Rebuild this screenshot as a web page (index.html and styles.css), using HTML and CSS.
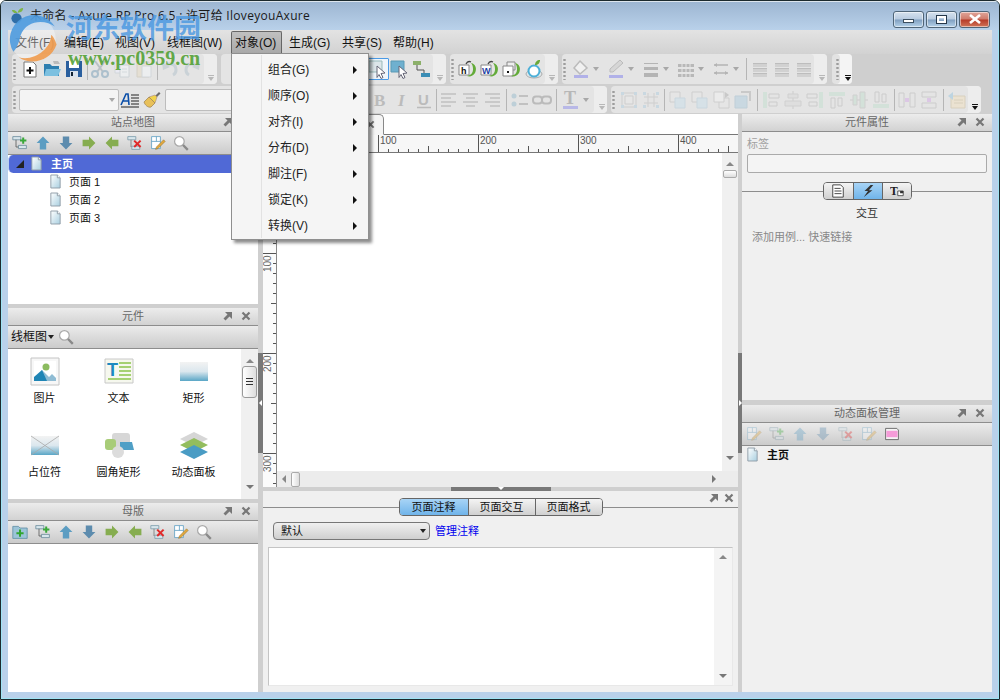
FILE: index.html
```html
<!DOCTYPE html>
<html lang="zh">
<head>
<meta charset="utf-8">
<title>未命名 - Axure RP Pro 6.5</title>
<link rel="stylesheet" href="styles.css">
</head>
<body>
<svg class="defs" width="0" height="0">
  <defs>
    <linearGradient id="gBlue" x1="0" y1="0" x2="0" y2="1"><stop offset="0" stop-color="#e8eef2"/><stop offset="1" stop-color="#6fb0cf"/></linearGradient>
    <linearGradient id="gPage" x1="0" y1="0" x2="1" y2="1"><stop offset="0" stop-color="#fff"/><stop offset="1" stop-color="#a9cfe0"/></linearGradient>
    <linearGradient id="gr" x1="0" y1="0" x2="0" y2="1"><stop offset="0" stop-color="#f3f3f3"/><stop offset=".5" stop-color="#dbe7ee"/><stop offset="1" stop-color="#5aa6c6"/></linearGradient>
    <symbol id="page" viewBox="0 0 14 16"><path d="M2 1h7l3 3v11H2z" fill="url(#gPage)" stroke="#8f9ca6"/><path d="M9 1v3h3" fill="#fff" stroke="#8f9ca6"/></symbol>
    <symbol id="new" viewBox="0 0 20 20"><path d="M4 3h9l3 3v12H4z" fill="#fff" stroke="#777"/><path d="M10 8v7M6.500 11.500h7" stroke="#111" stroke-width="2"/></symbol>
    <symbol id="open" viewBox="0 0 20 20"><path d="M2 5h6l2 2h7v10H2z" fill="#2e7fb0"/><path d="M2 17l2-7h15l-3 7z" fill="#7cc0e0"/><path d="M11 2h5l2 3h-6z" fill="#bbb"/></symbol>
    <symbol id="save" viewBox="0 0 20 20"><path d="M2 2h16v16H2z" fill="#2a5f9e"/><path d="M5 2h10v7H5z" fill="#fff"/><path d="M6 12h8v6H6z" fill="#d8e2ee"/><path d="M7 13h2v4H7z" fill="#123"/></symbol>
    <symbol id="cut" viewBox="0 0 20 20"><path d="M5 2l8 11M15 2L7 13" stroke="#99a4ad" stroke-width="2" fill="none"/><circle cx="5" cy="15" r="3" fill="none" stroke="#7fa3bb" stroke-width="2"/><circle cx="15" cy="15" r="3" fill="none" stroke="#7fa3bb" stroke-width="2"/></symbol>
    <symbol id="copy" viewBox="0 0 20 20"><path d="M3 2h8v12H3z" fill="#eef" stroke="#c4ccd2"/><path d="M8 6h9v12H8z" fill="#f4f7f9" stroke="#bcc6cc"/><path d="M10 10h5M10 13h5" stroke="#c8d2d8"/></symbol>
    <symbol id="paste" viewBox="0 0 20 20"><path d="M3 3h12v15H3z" fill="#e6dcc6" stroke="#c8c0ae"/><path d="M7 1h4v4H7z" fill="#bbb"/><path d="M8 7h9v11H8z" fill="#f4f7f9" stroke="#c4ccd2"/></symbol>
    <symbol id="undo" viewBox="0 0 20 20"><path d="M5 7c5-4 11-2 11 4 0 2-1 4-3 5" fill="none" stroke="#b5c4ce" stroke-width="3"/><path d="M2 3l1 8 7-3z" fill="#b5c4ce"/></symbol>
    <symbol id="redo" viewBox="0 0 20 20"><path d="M15 7c-5-4-11-2-11 4 0 2 1 4 3 5" fill="none" stroke="#b5c4ce" stroke-width="3"/><path d="M18 3l-1 8-7-3z" fill="#b5c4ce"/></symbol>
    <symbol id="sel1" viewBox="0 0 20 20"><path d="M1 2h13v11H1z" fill="#dce6ea" stroke="#9bb"/><path d="M9 7l8 7-4 .5 2 4-2 1-2-4-2 3z" fill="#fff" stroke="#667"/></symbol>
    <symbol id="sel2" viewBox="0 0 20 20"><path d="M1 2h13v11H1z" fill="#6fb0cf" stroke="#5a9ab5"/><path d="M9 7l8 7-4 .5 2 4-2 1-2-4-2 3z" fill="#fff" stroke="#667"/></symbol>
    <symbol id="conn" viewBox="0 0 20 20"><path d="M1 2h8v4H1z" fill="#8cb06a"/><path d="M5 6v5h7v3" fill="none" stroke="#555"/><path d="M9 14h9v4H9z" fill="#3a8db5"/></symbol>
    <symbol id="exph" viewBox="0 0 20 20"><path d="M1 6h10v10H1z" fill="#fff" stroke="#888"/><text x="3" y="14.500" font-family="Liberation Sans" font-weight="700" font-size="9" fill="#111">h</text><path d="M13 4c5 1 6 6 4 10-2 3-5 4-8 3 4-1 6-3 6-7 0-3-1-5-2-6z" fill="#64ab3a"/><path d="M8 5c1-2 3-3 5-2" fill="none" stroke="#444" stroke-width="1.300"/></symbol>
    <symbol id="expw" viewBox="0 0 20 20"><path d="M1 6h10v10H1z" fill="#fff" stroke="#888"/><text x="2" y="14.500" font-family="Liberation Sans" font-weight="700" font-size="9" fill="#1d3fa5">W</text><path d="M13 4c5 1 6 6 4 10-2 3-5 4-8 3 4-1 6-3 6-7 0-3-1-5-2-6z" fill="#64ab3a"/><path d="M8 5c1-2 3-3 5-2" fill="none" stroke="#444" stroke-width="1.300"/></symbol>
    <symbol id="expd" viewBox="0 0 20 20"><path d="M5 3h8v8H5z" fill="#eee" stroke="#888"/><path d="M1 7h10v10H1z" fill="#fff" stroke="#888"/><path d="M5 12h2v2H5z" fill="#111"/><path d="M13 4c5 1 6 6 4 10-2 3-5 4-8 3 4-1 6-3 6-7 0-3-1-5-2-6z" fill="#64ab3a"/></symbol>
    <symbol id="app" viewBox="0 0 20 20"><ellipse cx="10" cy="15" rx="8" ry="4" fill="#dfe7ea" stroke="#aaa"/><circle cx="10" cy="12" r="5.500" fill="#fff" stroke="#4db0d8" stroke-width="2"/><path d="M11 6c0-3 2-5 5-5 0 3-2 5-5 5z" fill="#6aa83a"/></symbol>
    <symbol id="fill" viewBox="0 0 20 20"><path d="M9 2l7 7-7 6-6-6z" fill="#f0f0f0" stroke="#bbb" stroke-width="1.500"/><path d="M3 16h14v3H3z" fill="#b1b1e8"/></symbol>
    <symbol id="pen" viewBox="0 0 20 20"><path d="M14 1l3 3-10 9H4v-3z" fill="#d6d6d6" stroke="#bbb"/><path d="M3 16h14v3H3z" fill="#b1b1e8"/></symbol>
    <symbol id="lines" viewBox="0 0 20 20"><path d="M3 4h14v1H3zM3 8h14v3H3zM3 14h14v4H3z" fill="#b4b4b4"/></symbol>
    <symbol id="dash" viewBox="0 0 20 20"><path d="M2 5h16v3H2zM2 10h16v3H2zM2 15h16v3H2z" fill="#b8b8b8"/><path d="M6 4v15M10 4v15M14 4v15" stroke="#e5e5e5"/></symbol>
    <symbol id="ends" viewBox="0 0 20 20"><path d="M3 6h14M3 14h14" stroke="#b4b4b4" stroke-width="1.500"/><path d="M3 6l3-2v4zM17 14l-3-2v4zM3 14l3-2v4z" fill="#b4b4b4"/></symbol>
    <symbol id="bars" viewBox="0 0 20 20"><path d="M3 4h14v1.500H3zM3 9h14v1.500H3zM3 14h14v1.500H3zM3 6.500h14v1H3zM3 11.500h14v1H3zM3 16.500h14v1H3z" fill="#bdbdbd"/></symbol>
    <symbol id="afont" viewBox="0 0 20 20"><path d="M1 15L6 4h2l1 11M3 11h6" fill="none" stroke="#0a4ea8" stroke-width="1.600"/><path d="M11 5h8M11 8h8M11 11h8M11 14h8M1 17h18" stroke="#222"/></symbol>
    <symbol id="brush" viewBox="0 0 20 20"><path d="M13 6l4-4 1.500 1.500-4 4z" fill="#6a6a6a"/><path d="M7 7l6-2 2 2-2 6z" fill="#f0d24a" stroke="#a88" stroke-width=".6"/><path d="M2 12l5-5 6 6-4 4c-3 1-6-2-7-5z" fill="#e8c05a" stroke="#9a8050" stroke-width=".7"/></symbol>
    <symbol id="bold" viewBox="0 0 20 20"><text x="4" y="16" font-family="Liberation Serif" font-weight="700" font-size="17" fill="#b5b5b5">B</text></symbol>
    <symbol id="ital" viewBox="0 0 20 20"><text x="6" y="16" font-family="Liberation Serif" font-weight="700" font-style="italic" font-size="17" fill="#b5b5b5">I</text></symbol>
    <symbol id="under" viewBox="0 0 20 20"><text x="4" y="15" font-family="Liberation Sans" font-weight="700" font-size="15" fill="#b5b5b5">U</text><path d="M3 17.500h14" stroke="#b5b5b5" stroke-width="1.500"/></symbol>
    <symbol id="al" viewBox="0 0 20 20"><path d="M2 4h15M2 8h10M2 12h15M2 16h10" stroke="#bbb" stroke-width="1.500"/></symbol>
    <symbol id="ac" viewBox="0 0 20 20"><path d="M2 4h15M5 8h9M2 12h15M5 16h9" stroke="#bbb" stroke-width="1.500"/></symbol>
    <symbol id="ar" viewBox="0 0 20 20"><path d="M2 4h15M7 8h10M2 12h15M7 16h10" stroke="#bbb" stroke-width="1.500"/></symbol>
    <symbol id="bul" viewBox="0 0 20 20"><circle cx="4" cy="6" r="2.500" fill="#b7ccd6"/><circle cx="4" cy="14" r="2.500" fill="#b7ccd6"/><path d="M9 6h9M9 14h9" stroke="#bbb" stroke-width="2"/></symbol>
    <symbol id="link" viewBox="0 0 20 20"><rect x="1" y="6.500" width="9" height="7" rx="3" fill="none" stroke="#b5b5b5" stroke-width="2"/><rect x="10" y="6.500" width="9" height="7" rx="3" fill="none" stroke="#b5b5b5" stroke-width="2"/></symbol>
    <symbol id="tcol" viewBox="0 0 20 20"><text x="3" y="14" font-family="Liberation Serif" font-weight="700" font-size="18" fill="#b0b0b0">T</text><path d="M2 16h15v3H2z" fill="#b1b1e8"/></symbol>
    <symbol id="grp" viewBox="0 0 20 20"><path d="M3 3h14v14H3z" fill="none" stroke="#c4c4c4"/><path d="M6 6h8v8H6z" fill="#e8e8e8" stroke="#c4c4c4"/><path d="M2 2h3v3H2zM15 2h3v3h-3zM2 15h3v3H2zM15 15h3v3h-3z" fill="#bcd3e0"/></symbol>
    <symbol id="ungrp" viewBox="0 0 20 20"><path d="M7 3v14M13 3v14M3 7h14M3 13h14" stroke="#c4c4c4"/><path d="M2 2h3v3H2zM15 2h3v3h-3zM2 15h3v3H2zM15 15h3v3h-3z" fill="#bcd3e0"/></symbol>
    <symbol id="ord1" viewBox="0 0 20 20"><path d="M3 2h10v10H3z" fill="#e6e6e6" stroke="#c4c4c4"/><path d="M8 8h10v10H8z" fill="#cfe0ea" stroke="#bdd0dc"/></symbol>
    <symbol id="ord2" viewBox="0 0 20 20"><path d="M8 8h10v10H8z" fill="#e6e6e6" stroke="#c4c4c4"/><path d="M3 2h10v10H3z" fill="#f0f0f0" stroke="#c4c4c4"/><path d="M14 2l4 3-4 3z" fill="#bbb"/></symbol>
    <symbol id="ord3" viewBox="0 0 20 20"><path d="M2 6h12v12H2z" fill="#bcd3e0" stroke="#adc4d2"/><path d="M8 2h9v9" fill="none" stroke="#bbb" stroke-width="2"/></symbol>
    <symbol id="ali1" viewBox="0 0 20 20"><path d="M2 2h4v16H2z" fill="#cbe0d4"/><path d="M8 4h10v4H8zM8 12h8v4H8z" fill="none" stroke="#c0c0c0"/></symbol>
    <symbol id="ali2" viewBox="0 0 20 20"><path d="M10 1v18" stroke="#c0c0c0"/><path d="M5 4h10v4H5zM2 11h16v5H2z" fill="#dcdcdc" stroke="#c6c6c6"/></symbol>
    <symbol id="ali3" viewBox="0 0 20 20"><path d="M14 2h4v16h-4z" fill="#cbe0d4"/><path d="M2 4h10v4H2zM4 12h8v4H4z" fill="none" stroke="#c0c0c0"/></symbol>
    <symbol id="ali4" viewBox="0 0 20 20"><path d="M2 2h16v4H2z" fill="#cbe0d4"/><path d="M4 8h4v10H4zM11 8h4v8h-4z" fill="none" stroke="#c0c0c0"/></symbol>
    <symbol id="ali5" viewBox="0 0 20 20"><path d="M1 10h18" stroke="#c0c0c0"/><path d="M4 5h4v10H4zM11 2h5v16h-5z" fill="#cbe0d4" stroke="#c6c6c6"/></symbol>
    <symbol id="ali6" viewBox="0 0 20 20"><path d="M2 14h16v4H2z" fill="#cbe0d4"/><path d="M4 2h4v10H4zM11 4h4v8h-4z" fill="none" stroke="#c0c0c0"/></symbol>
    <symbol id="dis1" viewBox="0 0 20 20"><path d="M2 3h5v14H2zM13 3h5v14h-5z" fill="none" stroke="#c0c0c0"/><path d="M8 8h4v4H8z" fill="#d9b8e6"/></symbol>
    <symbol id="dis2" viewBox="0 0 20 20"><path d="M3 2h14v5H3zM3 13h14v5H3z" fill="none" stroke="#c0c0c0"/><path d="M8 8h4v4H8z" fill="#d9b8e6"/></symbol>
    <symbol id="impt" viewBox="0 0 20 20"><path d="M4 6h14v12H4z" fill="#efe2c8" stroke="#d2c6aa"/><path d="M1 6l5-4v8z" fill="#a9cde0"/><path d="M7 10h9M7 13h9" stroke="#d2c6aa"/></symbol>
    <symbol id="addc" viewBox="0 0 20 20"><path d="M1 2h10v4H1zM8 13h10v4H8z" fill="#d8e6ec" stroke="#6a8a9a"/><path d="M5 6v9h3" fill="none" stroke="#555"/><path d="M14 3v8M10 7h8" stroke="#3aa83a" stroke-width="2.500"/></symbol>
    <symbol id="up" viewBox="0 0 20 20"><path d="M10 2l8 8h-4v8H6v-8H2z" fill="#5c9dc2"/></symbol>
    <symbol id="down" viewBox="0 0 20 20"><path d="M10 18l8-8h-4V2H6v8H2z" fill="#5d8cae"/></symbol>
    <symbol id="right" viewBox="0 0 20 20"><path d="M18 10l-8 8v-4H2V6h8V2z" fill="#86ad50"/></symbol>
    <symbol id="left" viewBox="0 0 20 20"><path d="M2 10l8 8v-4h8V6h-8V2z" fill="#86ad50"/></symbol>
    <symbol id="del" viewBox="0 0 20 20"><path d="M1 2h10v4H1zM6 14h10v4H6z" fill="#d8e6ec" stroke="#7a9aaa"/><path d="M5 6v9" stroke="#777"/><path d="M9 7l8 8M17 7l-8 8" stroke="#e02a2a" stroke-width="2.500"/></symbol>
    <symbol id="edit" viewBox="0 0 20 20"><path d="M2 2h11v15H2zM2 8h11M8 2v6" fill="#fff" stroke="#5c9dc2"/><path d="M17 6l2 2-9 9-3 1 1-3z" fill="#e2a93e" stroke="#8a6a2a" stroke-width=".6"/></symbol>
    <symbol id="find" viewBox="0 0 20 20"><circle cx="8" cy="8" r="6" fill="#fff" stroke="#a8a8a8" stroke-width="1.500"/><path d="M12.500 12.500l6 6" stroke="#8a8a8a" stroke-width="3"/></symbol>
    <symbol id="addm" viewBox="0 0 20 20"><path d="M1 3h7l2 2h9v13H1z" fill="#9cc4d8" stroke="#5f8ea5"/><path d="M10 7v9M5.500 11.500h9" stroke="#31a531" stroke-width="2.500"/></symbol>
    <symbol id="dpanel" viewBox="0 0 20 20"><path d="M2 3h14l2 2v12H2z" fill="#f4f4f4" stroke="#555"/><path d="M3 6h14v8H3z" fill="#f59bd8"/></symbol>
    <symbol id="pin" viewBox="0 0 10 10"><path d="M2 1h7v7L6.500 5.500 2.500 9.500 .5 7.500 4.500 3.500z" fill="#777"/></symbol>
    <symbol id="x" viewBox="0 0 10 10"><path d="M1.500 1.500l7 7M8.500 1.500l-7 7" stroke="#777" stroke-width="2.200"/></symbol>
    <symbol id="note" viewBox="0 0 16 16"><path d="M2 1h9l3 3v11H2z" fill="#fff" stroke="#333"/><path d="M4 5h7M4 8h8M4 11h8" stroke="#333"/></symbol>
    <symbol id="bolt" viewBox="0 0 16 16"><path d="M11 1L4 8h4l-5 7 10-8H9l5-6z" fill="#333"/></symbol>
    <symbol id="tstyle" viewBox="0 0 18 16"><text x="0" y="13" font-family="Liberation Serif" font-weight="700" font-size="15" fill="#222">T</text><path d="M10 8h7v6h-7z" fill="#fff" stroke="#333"/><path d="M13 8h4v3h-4z" fill="#333"/></symbol>
    <symbol id="wimg" viewBox="0 0 30 30"><path d="M1 1h28v27H1z" fill="#f7f7f7" stroke="#c4c4c4"/><path d="M4 4h22v20H4z" fill="#fff"/><circle cx="16" cy="10" r="3.500" fill="#8cbc60"/><path d="M4 24l8-11 7 7 3-3 4 4v3z" fill="#8fbcd4"/><path d="M4 24v-4l8-7 5 11z" fill="#1f85b5"/></symbol>
    <symbol id="wtxt" viewBox="0 0 30 30"><path d="M1 2h28v24H1z" fill="#f6f8ee" stroke="#c8c8c8"/><text x="3" y="19" font-family="Liberation Sans" font-weight="700" font-size="18" fill="#1c8ac0">T</text><path d="M15 6h12M15 10h12M15 14h12M15 18h12M4 22h23" stroke="#8cc44a" stroke-width="1.500"/></symbol>
    <symbol id="wrect" viewBox="0 0 30 30"><path d="M1 5h28v19H1z" fill="url(#gr)"/></symbol>
    <symbol id="wph" viewBox="0 0 30 30"><path d="M1 5h28v19H1z" fill="url(#gr)"/><path d="M1 5l28 19M29 5L1 24" stroke="#aaa" stroke-width=".8"/></symbol>
    <symbol id="wround" viewBox="0 0 30 30"><rect x="8" y="2" width="18" height="14" rx="3" fill="#d7d7d7"/><path d="M16 11h12l2 8H16z" fill="#4f9fc6"/><rect x="1" y="8" width="11" height="11" rx="3" fill="#a8cc78"/><circle cx="14" cy="21" r="6" fill="#dcdcdc"/></symbol>
    <symbol id="wdyn" viewBox="0 0 30 30"><path d="M15 1l14 7-14 7L1 8z" fill="#d6d6d6"/><path d="M15 7l14 7-14 7L1 14z" fill="#93bd5e"/><path d="M15 14l14 7-14 7L1 21z" fill="#4a9cc4"/></symbol>
  </defs>
</svg>

<div class="window">
  <header class="titlebar">
    <svg class="appicon" viewBox="0 0 16 18"><circle cx="7" cy="12" r="5.500" fill="#2f6ea8"/><path d="M8 6C6 3 4 3 2 3c1 3 3 4 6 3zM8 6c1-3 3-5 6-5 0 3-2 5-6 5z" fill="#7db548"/></svg>
    <span class="title-text">未命名 - Axure RP Pro 6.5 : 许可给 IloveyouAxure</span>
    <div class="winbtns">
      <div class="wbtn"><span class="min-mark"></span></div>
      <div class="wbtn"><span class="max-mark"></span></div>
      <div class="wbtn wclose"><svg class="close-mark" viewBox="0 0 14 10"><path d="M2 1l10 8M12 1L2 9" stroke="#fff" stroke-width="2.600"/></svg></div>
    </div>
  </header>

  <div class="chrome">
    <nav class="menubar">
      <span class="mitem w49">文件(F)</span>
      <span class="mitem w51">编辑(E)</span>
      <span class="mitem w52">视图(V)</span>
      <span class="mitem w68">线框图(W)</span>
      <span class="mitem w51 mopen">对象(O)</span>
      <span class="mitem w53">生成(G)</span>
      <span class="mitem w51">共享(S)</span>
      <span class="mitem w51">帮助(H)</span>
    </nav>

    <div class="toolrow row1">
      <div class="tgroup g1">
        <span class="handle"></span>
        <span class="ti"><svg><use href="#new"/></svg></span>
        <span class="ti"><svg><use href="#open"/></svg></span>
        <span class="ti"><svg><use href="#save"/></svg></span>
        <span class="sep"></span>
        <span class="ti off"><svg><use href="#cut"/></svg></span>
        <span class="ti off"><svg><use href="#copy"/></svg></span>
        <span class="ti off"><svg><use href="#paste"/></svg></span>
        <span class="sep"></span>
        <span class="ti off"><svg><use href="#undo"/></svg></span>
        <span class="ti off"><svg><use href="#redo"/></svg></span>
        <span class="over"></span>
      </div>
      <div class="tgroup g2">
        <span class="ti selected"><svg><use href="#sel1"/></svg></span>
        <span class="ti"><svg><use href="#sel2"/></svg></span>
        <span class="ti"><svg><use href="#conn"/></svg></span>
        <span class="over"></span>
      </div>
      <div class="tgroup g3">
        <span class="handle"></span>
        <span class="ti"><svg><use href="#exph"/></svg></span>
        <span class="ti"><svg><use href="#expw"/></svg></span>
        <span class="ti"><svg><use href="#expd"/></svg></span>
        <span class="ti"><svg><use href="#app"/></svg></span>
        <span class="over"></span>
      </div>
      <div class="tgroup g4">
        <span class="handle"></span>
        <span class="ti split"><svg><use href="#fill"/></svg><i class="caret"></i></span>
        <span class="ti split"><svg><use href="#pen"/></svg><i class="caret"></i></span>
        <span class="ti split"><svg><use href="#lines"/></svg><i class="caret"></i></span>
        <span class="ti split"><svg><use href="#dash"/></svg><i class="caret"></i></span>
        <span class="ti split"><svg><use href="#ends"/></svg><i class="caret"></i></span>
        <span class="sep s5"></span>
        <span class="ti"><svg><use href="#bars"/></svg></span>
        <span class="ti"><svg><use href="#bars"/></svg></span>
        <span class="ti"><svg><use href="#bars"/></svg></span>
        <span class="over"></span>
      </div>
      <div class="tgroup g5">
        <span class="handle"></span>
        <span class="over dark"></span>
      </div>
    </div>

    <div class="toolrow row2">
      <div class="tgroup ga">
        <span class="handle short"></span>
        <span class="combo c1"><i class="caret"></i></span>
        <span class="ti"><svg><use href="#afont"/></svg></span>
        <span class="ti"><svg><use href="#brush"/></svg></span>
        <span class="combo c2"></span>
        <span class="ti"><svg><use href="#bold"/></svg></span>
        <span class="ti"><svg><use href="#ital"/></svg></span>
        <span class="ti"><svg><use href="#under"/></svg></span>
        <span class="sep s3"></span>
        <span class="ti"><svg><use href="#al"/></svg></span>
        <span class="ti"><svg><use href="#ac"/></svg></span>
        <span class="ti"><svg><use href="#ar"/></svg></span>
        <span class="sep s5"></span>
        <span class="ti"><svg><use href="#bul"/></svg></span>
        <span class="ti"><svg><use href="#link"/></svg></span>
        <span class="sep s6"></span>
        <span class="ti split t2"><svg><use href="#tcol"/></svg><i class="caret"></i></span>
        <span class="over"></span>
      </div>
      <div class="tgroup gb">
        <span class="handle short"></span>
        <span class="ti"><svg><use href="#grp"/></svg></span>
        <span class="ti"><svg><use href="#ungrp"/></svg></span>
        <span class="sep"></span>
        <span class="ti"><svg><use href="#ord1"/></svg></span>
        <span class="ti"><svg><use href="#ord1"/></svg></span>
        <span class="ti"><svg><use href="#ord2"/></svg></span>
        <span class="ti"><svg><use href="#ord3"/></svg></span>
        <span class="sep s6"></span>
        <span class="ti"><svg><use href="#ali1"/></svg></span>
        <span class="ti"><svg><use href="#ali2"/></svg></span>
        <span class="ti"><svg><use href="#ali3"/></svg></span>
        <span class="ti"><svg><use href="#ali4"/></svg></span>
        <span class="ti"><svg><use href="#ali5"/></svg></span>
        <span class="ti"><svg><use href="#ali6"/></svg></span>
        <span class="sep"></span>
        <span class="ti"><svg><use href="#dis1"/></svg></span>
        <span class="ti"><svg><use href="#dis2"/></svg></span>
        <span class="sep s6"></span>
        <span class="ti"><svg><use href="#impt"/></svg></span>
        <span class="over dark"></span>
      </div>
    </div>

    <main class="workspace">
      <aside class="col-left">
        <section class="panel p-sitemap">
          <div class="phead">站点地图<span class="pbtns"><svg><use href="#pin"/></svg><svg><use href="#x"/></svg></span></div>
          <div class="ptools">
            <svg><use href="#addc"/></svg><svg><use href="#up"/></svg><svg><use href="#down"/></svg><svg><use href="#right"/></svg><svg><use href="#left"/></svg><svg><use href="#del"/></svg><svg><use href="#edit"/></svg><svg><use href="#find"/></svg>
          </div>
          <div class="tree">
            <div class="tnode root"><i class="expander"></i><svg class="pg"><use href="#page"/></svg><b>主页</b></div>
            <div class="tnode child"><svg class="pg"><use href="#page"/></svg>页面 1</div>
            <div class="tnode child"><svg class="pg"><use href="#page"/></svg>页面 2</div>
            <div class="tnode child"><svg class="pg"><use href="#page"/></svg>页面 3</div>
          </div>
        </section>
        <section class="panel p-widgets">
          <div class="phead">元件<span class="pbtns"><svg><use href="#pin"/></svg><svg><use href="#x"/></svg></span></div>
          <div class="ptools wtools"><span class="wlib">线框图</span><i class="caret black"></i><svg><use href="#find"/></svg></div>
          <div class="wbody">
            <div class="wgrid">
              <div class="widget"><svg><use href="#wimg"/></svg><span>图片</span></div>
              <div class="widget"><svg><use href="#wtxt"/></svg><span>文本</span></div>
              <div class="widget"><svg><use href="#wrect"/></svg><span>矩形</span></div>
              <div class="widget"><svg><use href="#wph"/></svg><span>占位符</span></div>
              <div class="widget"><svg><use href="#wround"/></svg><span>圆角矩形</span></div>
              <div class="widget"><svg><use href="#wdyn"/></svg><span>动态面板</span></div>
            </div>
            <div class="vbar wbar"><i class="ar-up"></i><span class="wthumb"></span><i class="ar-dn"></i></div>
          </div>
        </section>
        <section class="panel p-masters">
          <div class="phead">母版<span class="pbtns"><svg><use href="#pin"/></svg><svg><use href="#x"/></svg></span></div>
          <div class="ptools">
            <svg><use href="#addm"/></svg><svg><use href="#addc"/></svg><svg><use href="#up"/></svg><svg><use href="#down"/></svg><svg><use href="#right"/></svg><svg><use href="#left"/></svg><svg><use href="#del"/></svg><svg><use href="#edit"/></svg><svg><use href="#find"/></svg>
          </div>
          <div class="blank"></div>
        </section>
      </aside>

      <div class="vsplit"><span class="grip"><i class="nub-l"></i></span></div>

      <div class="col-center">
        <div class="tabbar"><span class="ptab"><svg><use href="#x"/></svg></span></div>
        <div class="hruler">
          <span class="rcell"></span>
          <span class="rcell">100</span><span class="rcell">200</span><span class="rcell">300</span><span class="rcell">400</span>
        </div>
        <div class="canvas-area">
          <div class="vruler">
            <span class="vcell"></span>
            <span class="vcell"><span class="vlab">100</span></span><span class="vcell"><span class="vlab">200</span></span><span class="vcell"><span class="vlab">300</span></span>
          </div>
          <div class="canvas-col">
            <div class="canvas-row">
              <div class="canvas"></div>
              <div class="vbar cbar"><i class="ar-up"></i><span class="cthumb"></span><i class="ar-dn"></i></div>
            </div>
            <div class="hbar"><i class="ar-lf"></i><span class="hthumb"></span><i class="ar-rt"></i></div>
          </div>
        </div>
        <div class="hsplit"><span class="hgrip"><i class="nub-d"></i></span></div>
        <section class="notes">
          <span class="pbtns"><svg><use href="#pin"/></svg><svg><use href="#x"/></svg></span>
          <div class="seg-wrap">
            <div class="seg">
              <span class="seg-b on">页面注释</span><span class="seg-b">页面交互</span><span class="seg-b">页面格式</span>
            </div>
          </div>
          <div class="note-ctl">
            <div class="dropdown"><span>默认</span><i class="caret black"></i></div>
            <a class="manage">管理注释</a>
          </div>
          <div class="note-area">
            <div class="vbar nbar"><i class="ar-up"></i><i class="ar-dn"></i></div>
          </div>
        </section>
      </div>

      <div class="vsplit vs2"><span class="grip"><i class="nub-r"></i></span></div>

      <aside class="col-right">
        <section class="panel p-props">
          <div class="phead">元件属性<span class="pbtns"><svg><use href="#pin"/></svg><svg><use href="#x"/></svg></span></div>
          <div class="lbl">标签</div>
          <div class="txtbox"></div>
          <div class="seg-wrap s2">
            <div class="seg seg-ic">
              <span class="seg-b"><svg><use href="#note"/></svg></span><span class="seg-b on"><svg><use href="#bolt"/></svg></span><span class="seg-b"><svg><use href="#tstyle"/></svg></span>
            </div>
          </div>
          <div class="inter">交互</div>
          <div class="quick">添加用例... 快速链接</div>
        </section>
        <section class="panel p-dyn">
          <div class="phead">动态面板管理<span class="pbtns"><svg><use href="#pin"/></svg><svg><use href="#x"/></svg></span></div>
          <div class="ptools dtools">
            <svg class="off"><use href="#edit"/></svg><svg class="off"><use href="#addc"/></svg><svg class="off"><use href="#up"/></svg><svg class="off"><use href="#down"/></svg><svg class="off"><use href="#del"/></svg><svg class="off"><use href="#edit"/></svg><svg><use href="#dpanel"/></svg>
          </div>
          <div class="dnode"><svg class="pg"><use href="#page"/></svg><b>主页</b></div>
        </section>
      </aside>
    </main>
  </div>

  <ul class="dropmenu">
    <li>组合(G)</li>
    <li>顺序(O)</li>
    <li>对齐(I)</li>
    <li>分布(D)</li>
    <li>脚注(F)</li>
    <li>锁定(K)</li>
    <li>转换(V)</li>
  </ul>

  <div class="watermark">
    <svg class="wm-logo" viewBox="0 0 60 60">
      <circle cx="28" cy="28" r="25" fill="#fff" fill-opacity=".35"/>
      <path d="M6 42A26 26 0 0 1 52 14C42 6 20 6 14 24c-2 7-3 13-8 18z" fill="#4d9ade" fill-opacity=".9"/>
      <path d="M12 48c14 10 36 4 42-14-2-6-4-9-6-11 0 16-20 30-36 25z" fill="#ee9a4d" fill-opacity=".9"/>
    </svg>
    <span class="wm-cn">河东软件园</span>
    <span class="wm-url">www.pc0359.cn</span>
  </div>
</div>
</body>
</html>
```
FILE: styles.css
```css
* { box-sizing: border-box; }
html, body { margin: 0; padding: 0; }
body {
  width: 1000px; height: 700px; overflow: hidden;
  font: 11px/16px "Liberation Sans", "Noto Sans CJK SC", sans-serif;
  color: #111;
}
.defs { position: absolute; }
svg { display: block; }
i { display: block; font-style: normal; }

.window {
  position: relative;
  width: 1000px; height: 700px;
  display: flex; flex-direction: column;
  background: #b9d1ea;
  border: 1px solid #1c2a2e;
  border-radius: 6px 6px 0 0;
  box-shadow: inset 0 0 0 1px #9fe4f4;
  overflow: hidden;
}

.titlebar {
  height: 29px; flex: none;
  display: flex; align-items: center;
  padding: 0 9px 0 9px;
  background: linear-gradient(#9cb5d1, #b9d1ea);
  box-shadow: inset 0 1px 0 #dde6ee;
}
.appicon { width: 15px; height: 17px; margin-right: 5px; }
.title-text { font-family: "Open Sans", "Noto Sans CJK SC", sans-serif; font-size: 12px; letter-spacing: .3px; color: #1a1a1a; flex: 1; }
.winbtns { display: flex; gap: 2px; margin-top: 7px; }
.wbtn {
  width: 31px; height: 17px;
  border: 1px solid #4f6578; border-radius: 3px;
  display: flex; align-items: center; justify-content: center;
  background: linear-gradient(#d6e2ee 0, #b8cbe0 48%, #7f9fc0 52%, #b5d2ea 100%);
  box-shadow: inset 0 0 0 1px rgba(255,255,255,.5);
}
.wclose { background: linear-gradient(#e0a69a 0, #cf7a6a 48%, #b63a28 52%, #d07458 100%); }
.min-mark { width: 11px; height: 4px; background: #fff; border: 1px solid #3c4f60; margin-top: 4px; }
.max-mark { width: 11px; height: 9px; background: transparent; border: 1px solid #26384a; box-shadow: inset 0 0 0 2px #fff; }
.close-mark { width: 14px; height: 10px; }

.chrome {
  flex: 1; min-height: 0;
  margin: 0 7px 7px 7px;
  display: flex; flex-direction: column;
  background: #cfcfcf;
}

.menubar {
  height: 24px; flex: none;
  display: flex; align-items: center;
  padding: 0 0 0 3px;
  background: linear-gradient(#e3e3e3, #d2d2d2);
}
.mitem { font-size: 12px; padding: 0 0 0 3px; height: 23px; line-height: 22px; white-space: nowrap; border: 1px solid transparent; flex: none; }
.w49 { width: 49px; } .w51 { width: 51px; } .w52 { width: 52px; } .w53 { width: 53px; } .w68 { width: 68px; }
.mopen {
  border: 1px solid #666; border-bottom: none; border-radius: 2px 2px 0 0;
  background: linear-gradient(#c0c0c0, #a8a8a8);
  margin-right: 3px;
}

.toolrow { display: flex; flex: none; padding-left: 4px; gap: 4px; }
.row1 { height: 30px; }
.row2 { height: 27px; margin-top: 2px; }
.tgroup {
  display: flex; align-items: center;
  background: #e4e4e4;
  border-radius: 4px;
  box-shadow: inset -13px 0 0 #ededed;
}
.row1 .tgroup { height: 30px; }
.g1 { width: 205px; }
.g2 { width: 225px; padding-left: 146px; }
.g3 { width: 108px; }
.g4 { width: 265px; }
.g5 { width: 20px; margin-left: 1px; box-shadow: inset -12px 0 0 #f4f4f4; background: #e2e2e2; }
.ga { width: 595px; height: 27px; }
.gb { width: 370px; height: 27px; }
.handle {
  width: 7px; height: 22px; flex: none;
  background: radial-gradient(circle at 2.5px 2px, #9d9d9d 1px, transparent 1.4px) 0 0 / 7px 4px repeat-y;
}
.handle.short { height: 20px; }
.ti {
  width: 22px; height: 22px; flex: none;
  display: flex; align-items: center; justify-content: center;
  position: relative;
}
.ti svg { width: 20px; height: 20px; }
.ti.off svg { opacity: .55; }
.ptools svg.off { opacity: .35; }
.gb .ti svg { opacity: .65; }
.c2 ~ .ti svg { opacity: .85; }
.ti.selected { border: 1px solid #4a9ae6; background: #eef5fb; border-radius: 1px; }
.ti.split { width: 35px; justify-content: flex-start; padding-left: 2px; gap: 2px; }
.ti.split.t2 { width: 36px; }
.caret { width: 0; height: 0; flex: none; border: 3.5px solid transparent; border-top: 4px solid #a8a8a8; border-bottom: 0; }
.caret.black { border-top-color: #222; }
.sep { width: 4px; height: 22px; flex: none; background: linear-gradient(#b5b5b5, #b5b5b5) center / 1px 100% no-repeat; }
.sep.s3 { width: 3px; }
.sep.s5 { width: 5px; }
.sep.s6 { width: 6px; }
.over {
  margin-left: auto; width: 13px; height: 100%; flex: none;
  display: flex; flex-direction: column; align-items: center; justify-content: flex-end;
  padding-bottom: 3px; gap: 1px;
}
.over::before { content: ""; width: 6px; height: 1px; background: #b8b8b8; }
.over::after { content: ""; width: 0; height: 0; border: 3px solid transparent; border-top: 4px solid #b8b8b8; border-bottom: 0; }
.over.dark::before { background: #111; }
.over.dark::after { border-top-color: #111; }
.g5 .handle { width: 8px; margin-left: 3px; }
.g5 .over { width: 9px; }
.combo {
  height: 22px; flex: none; background: #f4f4f4; border: 1px solid #bdbdbd; border-radius: 2px;
  display: flex; align-items: center; justify-content: flex-end; padding-right: 3px;
}
.c1 { width: 100px; }
.c2 { width: 202px; margin: 0 2px; }

.workspace {
  flex: 1; min-height: 0;
  display: grid; grid-template-columns: 250px 5px 475px 4px 250px;
  padding-top: 1px;
}
.col-left, .col-right, .col-center { display: flex; flex-direction: column; min-height: 0; }
.panel { background: #f0f0f0; display: flex; flex-direction: column; min-height: 0; position: relative; }
.p-sitemap { height: 190px; }
.p-widgets { height: 191px; margin-top: 4px; }
.p-masters { flex: 1; margin-top: 4px; }
.phead {
  height: 18px; flex: none; position: relative;
  text-align: center; color: #666; line-height: 17px;
  background: linear-gradient(#ececec, #d2d2d2);
  border-bottom: 1px solid #8d8d8d;
}
.pbtns { position: absolute; right: 7px; top: 3px; display: flex; gap: 8px; }
.pbtns svg { width: 10px; height: 10px; }
.ptools {
  height: 23px; flex: none;
  display: flex; align-items: center; gap: 7px; padding-left: 4px;
  background: linear-gradient(#ebebeb, #cbcbcb);
  border-bottom: 1px solid #8d8d8d;
}
.ptools svg { width: 16px; height: 16px; flex: none; }
.tree { flex: 1; background: #fff; }
.tnode { height: 18px; display: flex; align-items: center; white-space: nowrap; padding-bottom: 1px; }
.pg { width: 13px; height: 15px; flex: none; }
.root { background: #5069d6; color: #fff; padding-left: 7px; border-left: 1px solid #b9cdf0; border-radius: 5px 0 0 5px; }
.root b { margin-left: 8px; font-weight: 700; }
.root .pg { margin-left: 6px; }
.expander { width: 0; height: 0; border-left: 8px solid transparent; border-bottom: 8px solid #222; }
.child { padding-left: 41px; gap: 7px; }

.wtools { gap: 0; padding-left: 3px; }
.wlib { color: #111; font-size: 12px; }
.wtools .caret { margin: 0 4px 0 1px; }
.wbody { flex: 1; display: flex; background: #fff; min-height: 0; }
.wgrid { flex: 1; display: grid; grid-template-columns: 73px 75px 75px; grid-auto-rows: 74px; padding-top: 8px; }
.widget { display: flex; flex-direction: column; align-items: center; gap: 3px; }
.widget svg { width: 30px; height: 30px; }
.vbar { background: #f0f0f0; display: flex; flex-direction: column; align-items: center; }
.wbar { width: 17px; padding: 5px 0; justify-content: space-between; position: relative; }
.wthumb {
  position: absolute; top: 17px; left: 1px; width: 15px; height: 32px;
  border: 1px solid #9a9a9a; border-radius: 3px;
  background:
    repeating-linear-gradient(#333 0 1px, transparent 1px 3px) center / 7px 9px no-repeat,
    linear-gradient(90deg, #fff, #ddd);
}
.ar-up, .ar-dn, .ar-lf, .ar-rt { width: 0; height: 0; flex: none; border: 4px solid transparent; }
.ar-up { border-top: 0; border-bottom: 4px solid #888; margin-top: 5px; }
.ar-dn { border-bottom: 0; border-top: 4px solid #777; margin-bottom: 5px; }
.ar-lf { border-left: 0; border-right: 4px solid #888; }
.ar-rt { border-right: 0; border-left: 4px solid #777; }
.blank { flex: 1; background: #fff; }

.vsplit { background: #cfcfcf; display: flex; align-items: flex-start; }
.grip {
  margin-top: 239px; width: 100%; height: 100px; background: #787878;
  display: flex; align-items: center; justify-content: center;
}
.nub-l { border: 3px solid transparent; border-right: 3px solid #fff; border-left: 0; width: 0; height: 0; }
.nub-r { border: 3px solid transparent; border-left: 3px solid #fff; border-right: 0; width: 0; height: 0; }

.tabbar { height: 21px; flex: none; background: #fff; border-bottom: 1px solid #777; display: flex; padding-left: 86px; }
.ptab {
  width: 35px; height: 21px; background: #f4f4f4;
  border: 1px solid #888; border-bottom: 1px solid #f4f4f4; border-radius: 0 5px 0 0;
  display: flex; align-items: center; justify-content: flex-end; padding-right: 8px;
}
.ptab svg { width: 9px; height: 9px; }
.hruler {
  height: 18px; flex: none; display: flex; padding-left: 15px;
  background: #f7f7f7; border-bottom: 1px solid #777; overflow: hidden;
  color: #555; font-size: 10px; line-height: 12px;
}
.rcell {
  width: 100px; flex: none; padding-left: 2px;
  background:
    linear-gradient(#555, #555) 0 0 / 1px 100% no-repeat,
    linear-gradient(#555, #555) 50px 11px / 1px 6px no-repeat,
    repeating-linear-gradient(90deg, #555 0 1px, transparent 1px 10px) 0 14px / 100% 3px no-repeat;
}
.canvas-area { display: flex; height: 334px; flex: none; }
.vruler {
  width: 14px; flex: none; background: #fbfbfb; overflow: hidden;
  color: #666; font-size: 10px; line-height: 10px;
  border-right: 1px solid #888;
}
.vcell {
  display: block; height: 100px; width: 13px; padding-top: 1px;
  background:
    linear-gradient(#555, #555) 0 0 / 100% 1px no-repeat,
    linear-gradient(#555, #555) 8px 50px / 5px 1px no-repeat,
    repeating-linear-gradient(#555 0 1px, transparent 1px 10px) 10px 0 / 3px 100% no-repeat;
}
.vlab { display: block; width: 10px; height: 18px; writing-mode: vertical-rl; transform: rotate(180deg); white-space: nowrap; text-align: left; }
.canvas-col { flex: 1; display: flex; flex-direction: column; min-width: 0; }
.canvas-row { flex: 1; display: flex; min-height: 0; }
.canvas { flex: 1; background: #fff; }
.cbar { width: 16px; padding: 4px 0 6px; position: relative; justify-content: space-between; }
.cthumb { position: absolute; top: 17px; left: 1px; width: 14px; height: 8px; border: 1px solid #aaa; border-radius: 2px; background: linear-gradient(#fff, #ddd); }
.hbar { height: 16px; flex: none; background: #ececec; display: flex; align-items: center; padding: 0 22px 0 5px; }
.hthumb { width: 9px; height: 15px; margin-left: 5px; border: 1px solid #aaa; border-radius: 2px; background: linear-gradient(90deg, #fff, #ddd); margin-right: auto; }
.hsplit { height: 4px; flex: none; background: #cfcfcf; display: flex; justify-content: center; }
.hgrip { width: 100px; height: 4px; background: #787878; display: flex; justify-content: center; }
.nub-d { width: 0; height: 0; border: 3px solid transparent; border-top: 3px solid #fff; border-bottom: 0; }

.notes { flex: 1; min-height: 0; background: #f0f0f0; position: relative; display: flex; flex-direction: column; padding-top: 7px; }
.notes .pbtns { right: 4px; top: 2px; gap: 5px; }
.seg-wrap { display: flex; align-items: center; flex: none; }
.seg-wrap::before, .seg-wrap::after { content: ""; flex: 1; height: 1px; background: #8d8d8d; }
.seg { display: flex; border: 1px solid #666; border-radius: 4px; overflow: hidden; flex: none; }
.seg-b { height: 16px; line-height: 16px; width: 67px; text-align: center; background: linear-gradient(#f4f4f4, #d0d0d0); border-left: 1px solid #666; }
.seg-b:first-child { border-left: 0; width: 68px; }
.seg-b.on { background: linear-gradient(#a8d4f6, #70b4ea); }
.note-ctl { display: flex; align-items: center; margin: 6px 0 0 10px; gap: 5px; flex: none; }
.dropdown {
  width: 157px; height: 18px; border: 1px solid #777; border-radius: 4px;
  background: linear-gradient(#f0f0f0, #cfcfcf);
  display: flex; align-items: center; justify-content: space-between; padding: 0 3px 0 7px;
}
.manage { color: #0000ee; }
.note-area {
  margin: 7px 5px 6px 5px; flex: 1; background: #fff;
  border: 1px solid #c4c4c4; border-right-color: #e8e8e8; border-bottom-color: #e8e8e8;
  display: flex; justify-content: flex-end;
}
.nbar { width: 18px; justify-content: space-between; background: #f4f4f4; padding: 2px 0; }

.p-props { height: 286px; }
.p-dyn { flex: 1; margin-top: 5px; }
.lbl { color: #a0a0a0; margin: 4px 0 0 5px; height: 16px; line-height: 16px; }
.txtbox { height: 19px; margin: 2px 5px 0; background: #f4f4f4; border: 1px solid #aaa; border-radius: 2px; }
.s2 { margin-top: 9px; }
.seg-ic .seg-b, .seg-ic .seg-b:first-child { width: 29px; display: flex; align-items: center; justify-content: center; }
.seg-ic svg { width: 14px; height: 14px; }
.inter { text-align: center; margin-top: 5px; color: #333; }
.quick { margin: 8px 0 0 10px; color: #888; }
.dnode { display: flex; align-items: center; gap: 8px; padding: 0 0 1px 4px; height: 18px; }
.dnode b { font-weight: 700; }

.dropmenu {
  position: absolute; left: 230px; top: 52px; width: 138px; height: 187px;
  margin: 0; padding: 3px 0 0; list-style: none;
  font-size: 12px;
  background: #f5f5f5; border: 1px solid #8f8f8f;
  box-shadow: 3px 3px 3px rgba(0,0,0,.45);
}
.dropmenu::before { content: ""; position: absolute; left: 29px; top: 1px; bottom: 1px; width: 1px; background: #e2e2e2; }
.dropmenu li {
  height: 26px; line-height: 26px; padding-left: 36px; position: relative; color: #222;
}
.dropmenu li::after {
  content: ""; position: absolute; right: 11px; top: 9px;
  border: 4px solid transparent; border-left: 4px solid #111; border-right: 0;
}

.watermark { position: absolute; left: 7px; top: 13px; width: 200px; height: 56px; pointer-events: none; }
.wm-logo { position: absolute; left: 0; top: 0; width: 54px; height: 54px; }
.wm-cn {
  position: absolute; left: 58px; top: -3px; white-space: nowrap;
  font: 700 27px/32px "Noto Sans CJK SC", sans-serif; color: rgba(70,150,225,.8);
}
.wm-url {
  position: absolute; left: 60px; top: 34px; white-space: nowrap;
  font: 700 20px/20px "Liberation Serif", serif; color: rgba(80,160,50,.9);
}
```
